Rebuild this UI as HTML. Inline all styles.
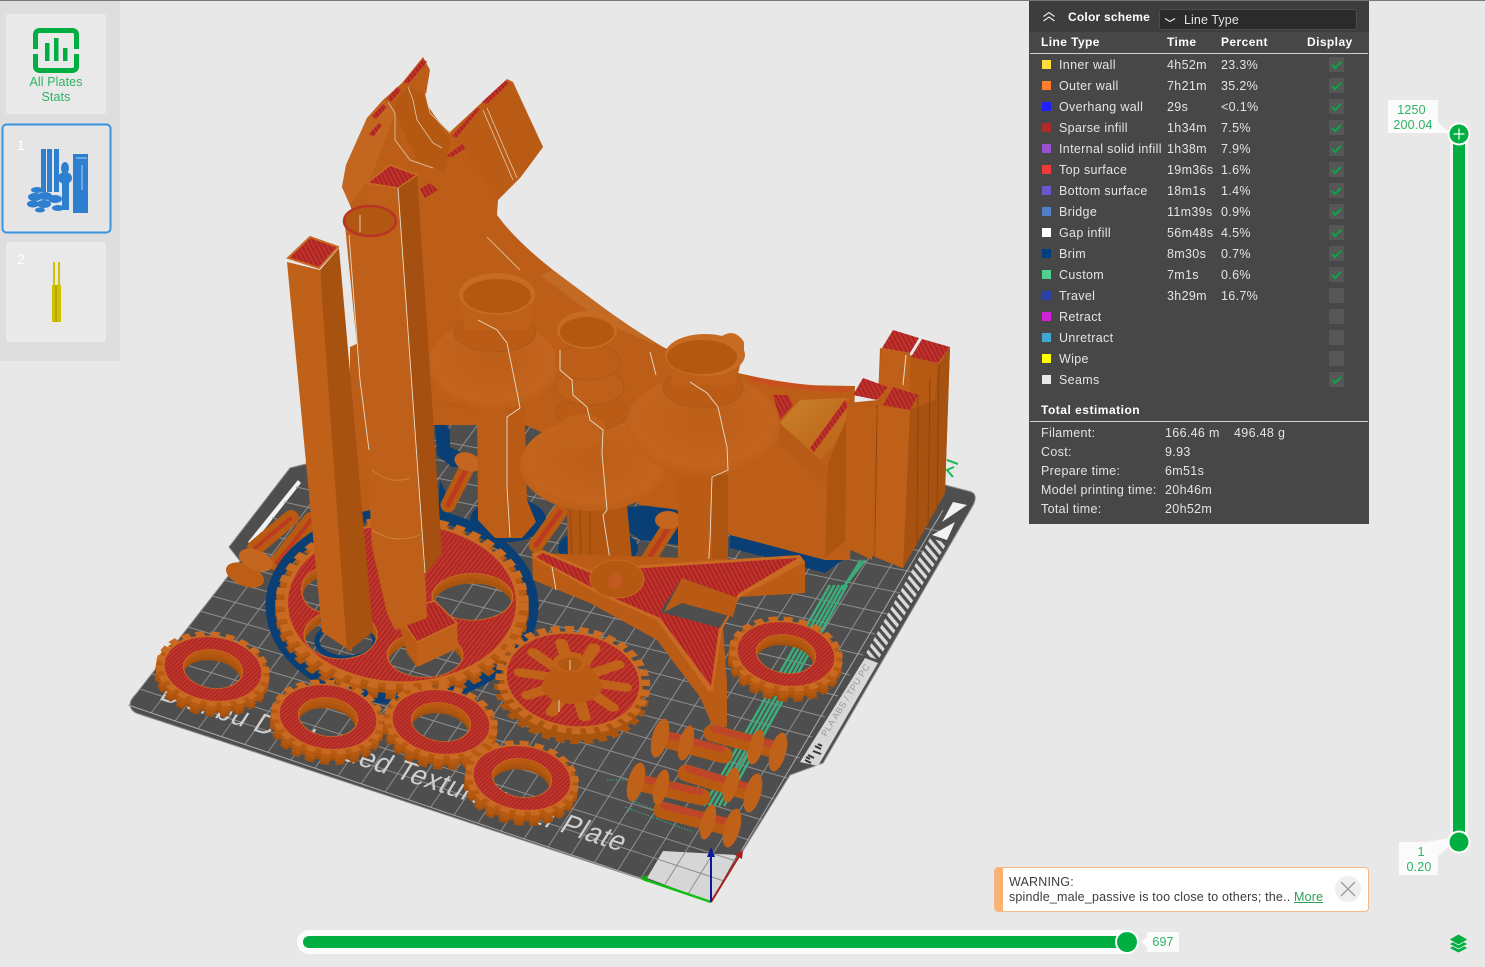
<!DOCTYPE html>
<html><head><meta charset="utf-8"><title>Preview</title>
<style>
html,body{margin:0;padding:0;width:1485px;height:967px;overflow:hidden;background:#e8e8e8;font-family:"Liberation Sans",sans-serif;}
#a{position:absolute;left:0;top:0;width:1485px;height:967px;overflow:hidden}
.t{position:absolute;white-space:nowrap;line-height:14px;font-size:12.5px;letter-spacing:.33px}
.w{color:#e4e4e4;margin-top:1px}.b{color:#fff;font-weight:bold;font-size:12px;letter-spacing:.42px;margin-top:1px}
.sw{position:absolute;left:1042px;width:9px;height:9px}
.cb{position:absolute;left:1329px;width:15px;height:15px;background:#565656}
.g{color:#2bb464;letter-spacing:.15px;margin-top:1px}
.wn{color:#3c3c3c;letter-spacing:.18px;margin-top:1px}
</style></head><body><div id="a">
<svg width="1485" height="967" style="position:absolute;left:0;top:0" xmlns="http://www.w3.org/2000/svg">
<defs>
<pattern id="rh" width="3.2" height="3.2" patternUnits="userSpaceOnUse" patternTransform="rotate(-62)"><rect width="3.2" height="3.2" fill="#c2352c"/><rect width="3.2" height="1.1" fill="#a32622"/></pattern>
<pattern id="rp" width="4" height="4" patternUnits="userSpaceOnUse" patternTransform="rotate(62)"><rect width="4" height="4" fill="#c2302c"/><rect width="4" height="1.4" fill="#9e2320"/></pattern>
<pattern id="ht" width="6.6" height="6.6" patternUnits="userSpaceOnUse" patternTransform="rotate(-40)"><rect width="6.6" height="6.6" fill="#4c4c4c"/><rect width="3.4" height="6.6" fill="#d8d8d8"/></pattern>
<radialGradient id="disc" cx=".5" cy=".45" r=".6"><stop offset="0" stop-color="#bc5e18"/><stop offset=".75" stop-color="#c2641e"/><stop offset="1" stop-color="#ba5c16"/></radialGradient>
<linearGradient id="ye" x1="0" y1="0" x2="1" y2="1"><stop offset="0" stop-color="#c8822a"/><stop offset="1" stop-color="#bd6018"/></linearGradient>
<g id="gear"><path fill="currentColor" fill-rule="evenodd" d="M-47,0a47,47 0 1,0 94,0a47,47 0 1,0 -94,0zM-27,0a27,27 0 1,0 54,0a27,27 0 1,0 -54,0z"/><circle r="49" fill="none" stroke="currentColor" stroke-width="8" stroke-dasharray="8.4 5.6"/></g>
<g id="fg">
<use href="#gear" y="15" color="#a4500f"/><use href="#gear" y="11" color="#b0560f"/><use href="#gear" y="6" color="#b85a12"/>
<use href="#gear" color="#c96a22"/>
<path fill="url(#rh)" fill-rule="evenodd" d="M-45,0a45,45 0 1,0 90,0a45,45 0 1,0 -90,0zM-28,0a28,28 0 1,0 56,0a28,28 0 1,0 -56,0z"/>
</g>
</defs>

<!-- plate -->
<path d="M136,694Q124,706 136,713L711,902L790,775L823,763L972,507Q980,493 968,491L945,485L368,393L310,463L290,468L229,547L240,561Z" fill="#4e4e4e" stroke="#8a8a8a" stroke-width="1"/>
<path d="M248,542L298,480L301,483L252,545Z" fill="#f2f2f2"/>
<path d="M647,878L663,851L737,855L711,902Z" fill="#d6d6d6"/>
<g stroke="#8e8e8e" stroke-width="1" fill="none">
<path d="M151,713L392,397M175,721L416,401M198,729L440,405M221,737L463,409M245,744L487,412M268,752L511,416M291,760L535,420M315,768L559,424M338,776L583,428M361,784L606,432M385,792L630,436M408,800L654,440M431,807L678,443M454,815L702,447M478,823L726,451M501,831L749,455M524,839L773,459M548,847L797,463M571,855L821,467M594,863L845,471M618,870L869,474M641,878L892,478M664,886L916,482M688,894L940,486"/>
<path d="M140,689L724,881M152,674L736,861M164,658L749,840M176,643L762,820M188,627L774,799M200,611L787,778M212,596L800,758M224,580L812,737M236,565L825,717M248,549L838,696M260,533L850,675M272,518L863,655M284,502L875,634M296,487L888,614M308,471L901,593M320,455L913,572M332,440L926,552M344,424L939,531"/>
<path d="M128,705L711,902L943,510" stroke="#a8a8a8"/>
</g>
<text transform="matrix(1 .33 -.6 .95 158 699)" font-family="Liberation Sans" font-size="26" fill="#cfcfcf" textLength="462" lengthAdjust="spacing">Bambu Dual-Sided Textured PEI Plate</text>
<path d="M865,655L930,538L947,543L878,660Z" fill="url(#ht)"/>
<path d="M800,762L865,658L878,663L818,766Z" fill="#d8d8d8"/>
<path d="M953,502L967,505L942,522Z" fill="#f2f2f2"/>
<path d="M955,522L947,540L932,535Z" fill="#f2f2f2"/>
<path d="M805,760l6,3M808,755l6,3M806,757l4,2M815,746l6,3M813,751l8,3M818,744l4,2" stroke="#333" stroke-width="2" fill="none"/>
<text transform="translate(826,737) rotate(-58)" font-family="Liberation Sans" font-size="9" fill="#9a9a9a" textLength="83" lengthAdjust="spacing">PLA ABS / TPU PC</text>
<path d="M947,460L958,464M954,467L947,470L953,477" stroke="#1db954" stroke-width="2" fill="none"/>

<!-- custom green -->
<g stroke="#3dab7b" fill="none">
<path stroke-width="2.6" d="M830,585L704,806M834.5,585L709,806M839,585L714,806M843,585L719,806M847,585L724,806M847,583L865,560M842,590L861,560"/>
<path d="M607,780H627M625,807L693,832M630,800L693,825M628,812L648,782" stroke-dasharray="1.5 1.5" stroke-width="1"/>
</g>
<!-- axes -->
<path d="M711,902L643,879" stroke="#10c010" stroke-width="2.5"/><path d="M640,878l8,-3 -1,7z" fill="#10b010"/>
<path d="M711,902L741,853" stroke="#a81c1c" stroke-width="2"/><path d="M743,850l-1,9 -7,-4z" fill="#a81c1c"/>
<path d="M711,902V854" stroke="#0a1a9a" stroke-width="2"/><path d="M711,847l4,10h-8z" fill="#0a1a9a"/>

<!-- navy brims -->
<g fill="#0a3f75">
<path d="M435,423Q448,421 450,432L450,447L466,455L466,467L452,467L437,455Z"/>
<path d="M627,507L660,505L680,512L680,545L640,540L627,530Z"/>
<path d="M730,533L820,558L843,538L843,560L825,573L800,566L730,548Z"/>
<path d="M440,480L452,505L448,520L438,512Z"/>
</g>
<ellipse cx="508" cy="520" rx="38" ry="22" fill="#0a3f75"/>
<ellipse cx="598" cy="548" rx="40" ry="20" fill="#0a3f75"/>

<!-- left spindles -->
<g fill="none" stroke-linecap="round">
<path d="M255,548L291,518" stroke="#b85a12" stroke-width="16"/><path d="M255,548L291,518" stroke="#bb3a20" stroke-width="4" stroke-dasharray="2 2"/>
<path d="M277,563L311,520" stroke="#b85a12" stroke-width="16"/><path d="M277,563L311,520" stroke="#bb3a20" stroke-width="4" stroke-dasharray="2 2"/>
<path d="M448,505L470,462" stroke="#b85a12" stroke-width="15"/><path d="M448,505L470,462" stroke="#bb3a20" stroke-width="5" stroke-dasharray="2 2"/>
</g>
<ellipse cx="245" cy="575" rx="20" ry="11" transform="rotate(22 245 575)" fill="#bc5e16"/>
<ellipse cx="256" cy="560" rx="18" ry="10" transform="rotate(22 256 560)" fill="#c46620"/>
<ellipse cx="468" cy="462" rx="14" ry="9" transform="rotate(20 468 462)" fill="#c46620"/>

<!-- main back body -->
<path d="M423,57L402,83L383,100L367,118L346,165L342,187L350,205L360,235L365,340L350,347L350,520L427,500L427,425L525,425L560,440L640,505L680,510L730,535L825,560L850,560L855,386L800,385Q760,382 747,375Q700,365 663,347Q620,322 553,270Q515,240 497,215L498,200L520,178L543,147L513,82L507,79L450,132Q435,120 425,100L430,70Z" fill="#bd5e18"/>
<!-- prong shading -->
<path d="M367,118L346,165L342,187L350,205L372,175L395,113L383,100Z" fill="#c36720"/>
<path d="M480,108L510,82L543,147L520,178Z" fill="#b95b15"/>
<path d="M455,138L480,108L517,178L498,200Z" fill="#ba5c16"/>
<path d="M395,113L417,160L445,172L450,140L430,113L425,93L408,87L395,100Z" fill="#b55812"/>
<path d="M553,270L620,320L660,347L600,320L540,275Z" fill="#c36b25"/>
<g fill="url(#rp)">
<path d="M404,82L423,59L427,62L408,84Z"/><path d="M387,99L397,87L401,90L391,102Z"/><path d="M372,116L383,104L387,107L376,119Z"/><path d="M369,134L379,123L382,125L373,137Z"/>
<path d="M482,102L505,81L509,83L487,104Z"/><path d="M452,136L477,108L480,109L456,138Z"/><path d="M446,156L462,144L466,148L452,157Z"/>
<path d="M420,189L430,183L438,190L425,198Z"/>
</g>
<g fill="none" stroke="#e6dcc8" stroke-width=".8" opacity=".85">
<path d="M388,102L395,113L395,140L410,160L433,168"/><path d="M408,87L413,100L417,120L433,143L442,148"/><path d="M425,93L430,113L450,133"/><path d="M487,108L517,178"/><path d="M483,110L513,180"/><path d="M487,237L520,270"/>
</g>
<!-- right block -->
<path d="M730,472L777,443L825,483L825,558L730,533Z" fill="#bd5e18"/>
<path d="M777,443L780,423L820,460L833,480L825,483Z" fill="#b85b16"/>
<path d="M780,423L800,400L847,398L847,420L833,447L820,460Z" fill="url(#ye)"/>
<path d="M773,395L788,395L793,405L780,420Z" fill="url(#rp)"/>
<path d="M810,448L845,400L849,405L814,452Z" fill="url(#rp)"/>
<path d="M828,463L846,420L846,540L825,558Z" fill="#ad5411"/>
<path d="M747,375Q800,387 853,387L850,392Q800,392 750,381Z" fill="#c8501f"/>
<!-- right towers -->
<path d="M880,348L910,355L938,363L950,347L945,493L903,568L875,557L845,547L847,403L878,400Z" fill="#bb5c16"/>
<path d="M910,410L950,347L945,493L903,568Z" fill="#a75210"/>
<path d="M882,348L910,353L909,405L878,390Z" fill="#bf601a"/>
<path d="M911,357L938,363L935,400L910,410Z" fill="#b65913"/>
<path d="M918,395L917,550M930,378L928,530M939,364L937,515M877,405L875,557" stroke="#8e440c" stroke-width="1" fill="none"/>
<path d="M847,403L877,408L872,560L845,547Z" fill="#bd5e17"/>
<path d="M878,406L910,410L903,568L875,557Z" fill="#bf6019"/>
<g fill="url(#rp)"><path d="M853,395L863,378L888,387L877,400Z"/><path d="M883,405L893,387L918,395L910,410Z"/><path d="M882,348L893,330L919,338L910,353Z"/><path d="M911,357L922,339L950,347L938,363Z"/></g>
<path d="M906,355L903,385" stroke="#e6dcc8" stroke-width="1"/>

<!-- big gear -->
<ellipse cx="402" cy="606" rx="131" ry="93" fill="none" stroke="#0a3f75" stroke-width="11"/>
<ellipse cx="346" cy="641" rx="29" ry="17" fill="none" stroke="#0a3f75" stroke-width="5"/>
<g transform="translate(402,603) scale(1.28,.88)">
<path fill="#a9540f" fill-rule="evenodd" transform="translate(0,11)" d="M-92,0a92,92 0 1,0 184,0a92,92 0 1,0 -184,0zM-76,36a28,27 0 1,0 56,0a28,27 0 1,0 -56,0zM-11,59a29,25 0 1,0 58,0a29,25 0 1,0 -58,0zM24,-7a31,26 0 1,0 62,0a31,26 0 1,0 -62,0zM-78,-15a18,25 0 1,0 36,0a18,25 0 1,0 -36,0z"/>
<circle cy="11" r="95" fill="none" stroke="#a9540f" stroke-width="8" stroke-dasharray="8 6"/>
<circle cy="5" r="95" fill="none" stroke="#b85a12" stroke-width="8" stroke-dasharray="8 6"/>
<path fill="#b65912" fill-rule="evenodd" transform="translate(0,5)" d="M-92,0a92,92 0 1,0 184,0a92,92 0 1,0 -184,0zM-76,36a28,27 0 1,0 56,0a28,27 0 1,0 -56,0zM-11,59a29,25 0 1,0 58,0a29,25 0 1,0 -58,0zM24,-7a31,26 0 1,0 62,0a31,26 0 1,0 -62,0zM-78,-15a18,25 0 1,0 36,0a18,25 0 1,0 -36,0z"/>
<circle r="95" fill="none" stroke="#c96a22" stroke-width="8" stroke-dasharray="8 6"/>
<path fill="#c96a22" fill-rule="evenodd" d="M-92,0a92,92 0 1,0 184,0a92,92 0 1,0 -184,0zM-76,36a28,27 0 1,0 56,0a28,27 0 1,0 -56,0zM-11,59a29,25 0 1,0 58,0a29,25 0 1,0 -58,0zM24,-7a31,26 0 1,0 62,0a31,26 0 1,0 -62,0zM-78,-15a18,25 0 1,0 36,0a18,25 0 1,0 -36,0z"/>
<path fill="url(#rh)" fill-rule="evenodd" d="M-89,0a89,89 0 1,0 178,0a89,89 0 1,0 -178,0zM-77,36a29,28 0 1,0 58,0a29,28 0 1,0 -58,0zM-12,59a30,26 0 1,0 60,0a30,26 0 1,0 -60,0zM23,-7a32,27 0 1,0 64,0a32,27 0 1,0 -64,0zM-79,-15a19,26 0 1,0 38,0a19,26 0 1,0 -38,0z"/>
</g>
<!-- cube block -->
<path d="M395,610L407,653L417,667L458,648L457,623L417,642Z" fill="#b95b14"/>
<path d="M417,642L457,623L458,648L417,667Z" fill="#c0611a"/>
<path d="M395,610L435,601L457,623L417,642Z" fill="url(#rp)" stroke="#c96a22" stroke-width="1.5"/>

<!-- V1 -->
<path d="M440,405L477,400H525V425L527,500L536,522L522,538L495,538L480,522L477,410Z" fill="#b95b15"/>
<path d="M477,405L478,520L495,538L507,538L508,405Z" fill="#bd5e18"/>
<ellipse cx="493" cy="365" rx="65" ry="45" fill="url(#disc)"/>
<ellipse cx="495" cy="332" rx="41" ry="20" fill="#bb5c16" stroke="#a9530f" stroke-width=".6"/>
<path d="M460,296H535L530,330H465Z" fill="#bf6019"/>
<ellipse cx="497" cy="294" rx="38" ry="21" fill="#c86b22"/>
<ellipse cx="497" cy="296" rx="34" ry="17" fill="#b35810"/>
<path d="M478,320L497,330L507,343L518,397L520,408L507,417L507,487L510,537" fill="none" stroke="#e6dcc8" stroke-width=".9"/>

<!-- S9 S10 spindles -->
<g fill="none" stroke-linecap="round">
<path d="M536,545L560,512" stroke="#b85a12" stroke-width="15"/><path d="M536,545L560,512" stroke="#bb3a20" stroke-width="5" stroke-dasharray="2 2"/>
<path d="M648,560L672,522" stroke="#b85a12" stroke-width="15"/><path d="M648,560L672,522" stroke="#bb3a20" stroke-width="5" stroke-dasharray="2 2"/>
</g>
<ellipse cx="668" cy="520" rx="13" ry="9" fill="#c46620"/>

<!-- V2 -->
<path d="M567,505H627L632,560L600,568L568,560Z" fill="#b25712"/>
<path d="M570,510l2,50M580,510l1,55M590,510v58" stroke="#a04d0e" stroke-width="2" fill="none"/>
<ellipse cx="593" cy="465" rx="73" ry="46" fill="url(#disc)"/>
<ellipse cx="592" cy="412" rx="36" ry="18" fill="#ba5c15" stroke="#a9530f" stroke-width=".6"/>
<ellipse cx="582" cy="431" rx="24" ry="17" fill="#c0621a"/>
<ellipse cx="590" cy="387" rx="34" ry="18" fill="#bf601a" stroke="#a9530f" stroke-width=".6"/>
<ellipse cx="588" cy="362" rx="32" ry="18" fill="#bd5e18" stroke="#a9530f" stroke-width=".6"/>
<ellipse cx="587" cy="330" rx="30" ry="19" fill="#c86b22"/>
<ellipse cx="587" cy="332" rx="27" ry="15" fill="#b35810"/>
<path d="M560,350L560,370L572,380L573,395L587,407L590,420L603,430L602,453L607,510L603,515L610,560" fill="none" stroke="#e6dcc8" stroke-width=".9"/>

<!-- V3 -->
<path d="M678,470H728V560L730,570H678Z" fill="#bb5c16"/><path d="M712,475H728V565H712Z" fill="#ad5411"/>
<ellipse cx="703" cy="425" rx="77" ry="50" fill="url(#disc)"/>
<ellipse cx="703" cy="388" rx="40" ry="20" fill="#bb5c16" stroke="#a9530f" stroke-width=".6"/>
<path d="M668,358H742L735,385H672Z" fill="#bf6019"/>
<ellipse cx="705" cy="355" rx="40" ry="21" fill="#c86b22"/>
<path d="M722,336Q735,328 744,342L744,356L725,345Z" fill="#c86b22"/>
<ellipse cx="702" cy="357" rx="35" ry="17" fill="#b35810"/>
<path d="M690,382L707,393L718,407L727,447L728,470L712,477L710,540L708,570" fill="none" stroke="#e6dcc8" stroke-width=".9"/>
<path d="M650,352L656,375" stroke="#e6dcc8" stroke-width=".9" fill="none"/>

<!-- tower 3 -->
<path d="M367,183L398,188L425,573L395,560Z" fill="#bf601a"/>
<path d="M398,188L417,175L442,553L425,575Z" fill="#a55010"/>
<path d="M367,183L390,165L417,175L398,188Z" fill="url(#rp)" stroke="#c96a22" stroke-width="1.5"/>
<path d="M398,188L425,573" stroke="#e6dcc8" stroke-width=".9"/>
<!-- tube -->
<path d="M345,225C345,240 396,240 397,225L426,590L427,618L395,630L387,613L372,547L367,447Z" fill="#bf601a"/>
<path d="M372,470Q390,485 410,478M372,530Q395,545 420,535" fill="none" stroke="#d08a3a" stroke-width=".8"/>
<ellipse cx="370" cy="221" rx="26" ry="15" fill="#b25712" stroke="#b83525" stroke-width="2.5"/>
<path d="M360,215V232M349,235L360,380L369,450" fill="none" stroke="#e6dcc8" stroke-width=".9"/>
<!-- tower 1 -->
<path d="M287,262L320,270L352,652L322,632Z" fill="#c0611a"/>
<path d="M320,270L339,248L373,632L347,652Z" fill="#a85210"/>
<path d="M288,258L310,237L338,247L319,268Z" fill="url(#rp)" stroke="#c96a22" stroke-width="2"/>

<!-- small gears -->
<use href="#fg" transform="translate(213,669) rotate(8) scale(1.08,.7)"/>
<use href="#fg" transform="translate(328,717) rotate(8) scale(1.08,.7)"/>
<use href="#fg" transform="translate(441,722) rotate(8) scale(1.08,.7)"/>
<use href="#fg" transform="translate(522,778) rotate(8) scale(1.08,.7)"/>
<use href="#fg" transform="translate(786,654) rotate(8) scale(1.08,.7)"/>
<!-- spoked gear -->
<g transform="translate(573,680) rotate(8) scale(1.48,1.02)">
<circle cy="10" r="49" fill="#a9540f"/><circle cy="10" r="49" fill="none" stroke="#a9540f" stroke-width="7" stroke-dasharray="6 3.6"/>
<circle r="49" fill="none" stroke="#c96a22" stroke-width="7" stroke-dasharray="6 3.6"/>
<circle r="47" fill="#c96a22"/><circle r="45" fill="url(#rh)"/>
<path d="M18,0H36M14.5,10.6L29,21.2M5.6,17.1L11.1,34.2M-5.6,17.1L-11.1,34.2M-14.5,10.6L-29,21.2M-18,0H-36M-14.5,-10.6L-29,-21.2M-5.6,-17.1L-11.1,-34.2M5.6,-17.1L11.1,-34.2M14.5,-10.6L29,-21.2" stroke="#c0621a" stroke-width="8.5" stroke-linecap="round"/>
</g>
<ellipse cx="572" cy="686" rx="30" ry="18" fill="#b95b14"/>
<path d="M544,682L556,662H586L602,682Z" fill="#bb5c16"/>
<ellipse cx="570" cy="662" rx="17" ry="10" fill="#c0621a"/>
<ellipse cx="570" cy="664" rx="12" ry="6.5" fill="#b35810"/>
<path d="M570,660V670M559,700V712" stroke="#e6dcc8" stroke-width=".9"/>

<!-- arm -->
<path d="M532,553L533,580L590,603L657,640L700,697L713,727L727,727L727,683L723,627L740,597L805,593L805,562Z" fill="#bb5c16"/>
<path d="M532,553L543,550L590,570L643,565L800,555L805,562L740,597L722,630L713,690L709,692L657,620L600,595L533,558Z" fill="#c96a22"/>
<path d="M543,553L590,573L645,568L798,558L738,594L719,628L711,686L660,618L600,592L536,557Z" fill="url(#rp)"/>
<ellipse cx="617" cy="579" rx="27" ry="19" fill="#b45812" stroke="#c96a22"/>
<path d="M608,578l8,-6 7,8 -4,9 -10,-2z" fill="#c15a20"/>
<path d="M660,612L682,578L738,598L720,628Z" fill="#4e4e4e"/>
<path d="M682,578L738,598L733,617L682,603L664,612Z" fill="#b85a14"/>
<path d="M552,567L556,590" stroke="#e6dcc8" stroke-width=".9" fill="none"/>

<!-- front spindles -->
<g fill="none" stroke-linecap="round">
<path d="M664,739L724,755" stroke="#b85a12" stroke-width="17"/><path d="M668,735L722,749" stroke="#bf4528" stroke-width="7" stroke-dasharray="1.6 1.6"/>
<path d="M712,733L776,750" stroke="#b85a12" stroke-width="17"/><path d="M714,729L772,744" stroke="#bf4528" stroke-width="7" stroke-dasharray="1.6 1.6"/>
<path d="M636,782L702,797" stroke="#b85a12" stroke-width="17"/><path d="M640,778L700,792" stroke="#bf4528" stroke-width="7" stroke-dasharray="1.6 1.6"/>
<path d="M686,773L752,793" stroke="#b85a12" stroke-width="17"/><path d="M688,769L750,787" stroke="#bf4528" stroke-width="7" stroke-dasharray="1.6 1.6"/>
<path d="M662,810L728,827" stroke="#b85a12" stroke-width="17"/><path d="M664,806L726,821" stroke="#bf4528" stroke-width="7" stroke-dasharray="1.6 1.6"/>
</g>
<g fill="#c0611a">
<ellipse cx="660" cy="738" rx="8" ry="20" transform="rotate(15 660 738)"/><ellipse cx="686" cy="743" rx="7" ry="18" transform="rotate(15 686 743)"/>
<ellipse cx="756" cy="747" rx="7" ry="18" transform="rotate(15 756 747)"/><ellipse cx="778" cy="752" rx="8" ry="20" transform="rotate(15 778 752)"/>
<ellipse cx="636" cy="782" rx="8" ry="20" transform="rotate(15 636 782)"/><ellipse cx="661" cy="787" rx="7" ry="18" transform="rotate(15 661 787)"/>
<ellipse cx="731" cy="785" rx="7" ry="18" transform="rotate(15 731 785)"/><ellipse cx="753" cy="793" rx="8" ry="20" transform="rotate(15 753 793)"/>
<ellipse cx="708" cy="822" rx="7" ry="18" transform="rotate(15 708 822)"/><ellipse cx="732" cy="828" rx="8" ry="20" transform="rotate(15 732 828)"/>
</g>

<!-- left panel -->
<rect x="0" y="0" width="120" height="361" fill="#dedede"/>
<rect x="6" y="14" width="100" height="100" rx="2" fill="#e9e9e9"/>
<rect x="2.5" y="124.5" width="108" height="108" rx="4" fill="#e5e5e5" stroke="#3a93e0" stroke-width="2"/>
<rect x="6" y="242" width="100" height="100" rx="2" fill="#e9e9e9"/>
<path d="M35.5,49V35Q35.5,30.5 40,30.5H72Q76.5,30.5 76.5,35V49M35.5,54V66Q35.5,70.5 40,70.5H72Q76.5,70.5 76.5,66V54" fill="none" stroke="#00ae42" stroke-width="5"/>
<path d="M45,43h4.5v18h-4.5zM54,38h4.5v23h-4.5zM63,48h4.5v13h-4.5z" fill="#00ae42"/>
<g fill="#2f7fd0">
<rect x="41" y="149" width="5" height="43"/><rect x="47" y="149" width="5" height="43"/><rect x="54" y="149" width="5" height="43"/>
<rect x="73" y="154" width="15" height="59"/>
<ellipse cx="65" cy="168" rx="4" ry="6"/><ellipse cx="65" cy="178" rx="7" ry="6"/><rect x="62" y="182" width="7" height="28"/>
<ellipse cx="37" cy="190" rx="6" ry="3"/><ellipse cx="35" cy="197" rx="7" ry="4"/><ellipse cx="45" cy="196" rx="7" ry="4"/><ellipse cx="33" cy="204" rx="6" ry="3.5"/><ellipse cx="44" cy="204" rx="7" ry="4"/><ellipse cx="55" cy="199" rx="7" ry="4"/><ellipse cx="58" cy="208" rx="6" ry="3"/><ellipse cx="40" cy="210" rx="5" ry="2.5"/>
</g>
<path d="M76,158h11M82,165v25" stroke="#a8d0f0" stroke-width="1"/>
<g fill="#cfc000"><rect x="52" y="285" width="9" height="37"/><rect x="53" y="262" width="2" height="23"/><rect x="58" y="262" width="2" height="23"/></g>
<path d="M56,285v37" stroke="#8f8600" stroke-width=".8"/>

<!-- top line -->
<rect x="0" y="0" width="1485" height="1" fill="#777"/>

<!-- right slider -->
<rect x="1450" y="128" width="18" height="720" rx="9" fill="#f4f4f4"/>
<rect x="1453" y="134" width="12" height="708" fill="#00ae42"/>
<path d="M1388,100H1438V122L1450,133H1388Z" fill="#fbfbfb"/>
<path d="M1399,842H1420L1438,842V875H1399Z" fill="#fbfbfb"/><path d="M1420,843L1450,838V846L1438,856Z" fill="#fbfbfb"/>
<circle cx="1459" cy="134" r="11.5" fill="#fff"/><circle cx="1459" cy="134" r="9.5" fill="#00ae42"/>
<path d="M1459,128.5V139.5M1453.5,134H1464.5" stroke="#fff" stroke-width="1.2"/>
<circle cx="1459" cy="842" r="11.5" fill="#fff"/><circle cx="1459" cy="842" r="9.5" fill="#00ae42"/>

<!-- bottom slider -->
<rect x="297" y="930" width="840" height="24" rx="12" fill="#fbfbfb"/>
<rect x="303" y="936" width="824" height="12" rx="6" fill="#00ae42"/>
<circle cx="1127" cy="942" r="12" fill="#fff"/><circle cx="1127" cy="942" r="10" fill="#00ae42"/>
<rect x="1147" y="932" width="32" height="20" rx="1" fill="#fbfbfb"/><path d="M1147,937L1141,942L1147,947Z" fill="#fbfbfb"/>
<!-- layers icon -->
<g fill="#00ae42" stroke="#e8e8e8" stroke-width=".8"><path d="M1449,948L1458.5,943L1468,948L1458.5,953Z"/><path d="M1449,944L1458.5,939L1468,944L1458.5,949Z"/><path d="M1449,939.5L1458.5,934L1468,939.5L1458.5,945Z"/></g>
</svg>

<div class="t" style="left:6px;top:75px;width:100px;text-align:center;color:#2bb464;font-size:12.5px;line-height:15px;letter-spacing:.1px">All Plates<br>Stats</div>
<div class="t" style="left:17px;top:138px;color:#fff;font-size:14px">1</div>
<div class="t" style="left:17px;top:252px;color:#fff;font-size:14px">2</div>

<!-- table -->
<div style="position:absolute;left:1029px;top:1px;width:340px;height:523px;background:#474747"></div>
<div style="position:absolute;left:1029px;top:1px;width:340px;height:31px;background:#3d3d3d"></div>
<div style="position:absolute;left:1159px;top:9px;width:196px;height:19px;background:#2b2b2b;border:1px solid #4d4d4d;border-radius:3px"></div>
<svg width="340" height="40" style="position:absolute;left:1029px;top:0">
<path d="M14.5,16.5L20,12.5L25.5,16.5M14.5,21L20,17L25.5,21" fill="none" stroke="#eee" stroke-width="1.1"/>
<path d="M136,18.5L141,21.5L146,18.5" fill="none" stroke="#eee" stroke-width="1.1"/>
</svg>
<div class="t b" style="left:1068px;top:9px;letter-spacing:.22px">Color scheme</div>
<div class="t" style="left:1184px;top:13px;color:#e4e4e4;letter-spacing:.1px">Line Type</div>
<div class="t b" style="left:1041px;top:34px">Line Type</div>
<div class="t b" style="left:1167px;top:34px">Time</div>
<div class="t b" style="left:1221px;top:34px">Percent</div>
<div class="t b" style="left:1307px;top:34px">Display</div>
<div style="position:absolute;left:1030px;top:53px;width:338px;height:1px;background:#cfcfcf"></div>

<div class="sw" style="top:60px;background:#ffdf3a"></div><div class="t w" style="left:1059px;top:57px">Inner wall</div><div class="t w" style="left:1167px;top:57px">4h52m</div><div class="t w" style="left:1221px;top:57px">23.3%</div>
<div class="sw" style="top:81px;background:#ff7f2f"></div><div class="t w" style="left:1059px;top:78px">Outer wall</div><div class="t w" style="left:1167px;top:78px">7h21m</div><div class="t w" style="left:1221px;top:78px">35.2%</div>
<div class="sw" style="top:102px;background:#1f1fff"></div><div class="t w" style="left:1059px;top:99px">Overhang wall</div><div class="t w" style="left:1167px;top:99px">29s</div><div class="t w" style="left:1221px;top:99px">&lt;0.1%</div>
<div class="sw" style="top:123px;background:#b02a2a"></div><div class="t w" style="left:1059px;top:120px">Sparse infill</div><div class="t w" style="left:1167px;top:120px">1h34m</div><div class="t w" style="left:1221px;top:120px">7.5%</div>
<div class="sw" style="top:144px;background:#9650d0"></div><div class="t w" style="left:1059px;top:141px">Internal solid infill</div><div class="t w" style="left:1167px;top:141px">1h38m</div><div class="t w" style="left:1221px;top:141px">7.9%</div>
<div class="sw" style="top:165px;background:#f03a3a"></div><div class="t w" style="left:1059px;top:162px">Top surface</div><div class="t w" style="left:1167px;top:162px">19m36s</div><div class="t w" style="left:1221px;top:162px">1.6%</div>
<div class="sw" style="top:186px;background:#6a55cc"></div><div class="t w" style="left:1059px;top:183px">Bottom surface</div><div class="t w" style="left:1167px;top:183px">18m1s</div><div class="t w" style="left:1221px;top:183px">1.4%</div>
<div class="sw" style="top:207px;background:#5080c8"></div><div class="t w" style="left:1059px;top:204px">Bridge</div><div class="t w" style="left:1167px;top:204px">11m39s</div><div class="t w" style="left:1221px;top:204px">0.9%</div>
<div class="sw" style="top:228px;background:#fff"></div><div class="t w" style="left:1059px;top:225px">Gap infill</div><div class="t w" style="left:1167px;top:225px">56m48s</div><div class="t w" style="left:1221px;top:225px">4.5%</div>
<div class="sw" style="top:249px;background:#003f7f"></div><div class="t w" style="left:1059px;top:246px">Brim</div><div class="t w" style="left:1167px;top:246px">8m30s</div><div class="t w" style="left:1221px;top:246px">0.7%</div>
<div class="sw" style="top:270px;background:#50d090"></div><div class="t w" style="left:1059px;top:267px">Custom</div><div class="t w" style="left:1167px;top:267px">7m1s</div><div class="t w" style="left:1221px;top:267px">0.6%</div>
<div class="sw" style="top:291px;background:#2a3fa8"></div><div class="t w" style="left:1059px;top:288px">Travel</div><div class="t w" style="left:1167px;top:288px">3h29m</div><div class="t w" style="left:1221px;top:288px">16.7%</div>
<div class="sw" style="top:312px;background:#d020d8"></div><div class="t w" style="left:1059px;top:309px">Retract</div>
<div class="sw" style="top:333px;background:#40a8d0"></div><div class="t w" style="left:1059px;top:330px">Unretract</div>
<div class="sw" style="top:354px;background:#ffff00"></div><div class="t w" style="left:1059px;top:351px">Wipe</div>
<div class="sw" style="top:375px;background:#e8e8e8"></div><div class="t w" style="left:1059px;top:372px">Seams</div>

<div class="cb" style="top:57px"></div><div class="cb" style="top:78px"></div><div class="cb" style="top:99px"></div><div class="cb" style="top:120px"></div><div class="cb" style="top:141px"></div><div class="cb" style="top:162px"></div><div class="cb" style="top:183px"></div><div class="cb" style="top:204px"></div><div class="cb" style="top:225px"></div><div class="cb" style="top:246px"></div><div class="cb" style="top:267px"></div><div class="cb" style="top:288px"></div><div class="cb" style="top:309px"></div><div class="cb" style="top:330px"></div><div class="cb" style="top:351px"></div><div class="cb" style="top:372px"></div>
<svg width="15" height="335" style="position:absolute;left:1329px;top:57px" fill="none" stroke="#0aa548" stroke-width="2">
<path d="M3,8L6,11L12,5"/><path d="M3,29L6,32L12,26"/><path d="M3,50L6,53L12,47"/><path d="M3,71L6,74L12,68"/><path d="M3,92L6,95L12,89"/><path d="M3,113L6,116L12,110"/><path d="M3,134L6,137L12,131"/><path d="M3,155L6,158L12,152"/><path d="M3,176L6,179L12,173"/><path d="M3,197L6,200L12,194"/><path d="M3,218L6,221L12,215"/><path d="M3,323L6,326L12,320"/>
</svg>

<div class="t b" style="left:1041px;top:402px;letter-spacing:.5px">Total estimation</div>
<div style="position:absolute;left:1030px;top:421px;width:338px;height:1px;background:#cfcfcf"></div>
<div class="t w" style="left:1041px;top:425px">Filament:</div><div class="t w" style="left:1165px;top:425px">166.46 m</div><div class="t w" style="left:1234px;top:425px">496.48 g</div>
<div class="t w" style="left:1041px;top:444px">Cost:</div><div class="t w" style="left:1165px;top:444px">9.93</div>
<div class="t w" style="left:1041px;top:463px">Prepare time:</div><div class="t w" style="left:1165px;top:463px">6m51s</div>
<div class="t w" style="left:1041px;top:482px">Model printing time:</div><div class="t w" style="left:1165px;top:482px">20h46m</div>
<div class="t w" style="left:1041px;top:501px">Total time:</div><div class="t w" style="left:1165px;top:501px">20h52m</div>

<!-- warning -->
<div style="position:absolute;left:994px;top:867px;width:373px;height:43px;background:#fff;border:1px solid #f5b888;border-radius:4px;overflow:hidden"><div style="position:absolute;left:-1px;top:-1px;width:9px;height:45px;background:#fdb274"></div></div>
<div class="t wn" style="left:1009px;top:874px">WARNING:</div>
<div class="t wn" style="left:1009px;top:889px">spindle_male_passive is too close to others; the..</div>
<div class="t" style="left:1294px;top:890px;color:#2c9e55;letter-spacing:.18px;text-decoration:underline">More</div>
<svg width="28" height="28" style="position:absolute;left:1334px;top:875px"><circle cx="14" cy="14" r="13" fill="#efefef"/><path d="M7,7L21,21M21,7L7,21" stroke="#9a9a9a" stroke-width="1.3"/></svg>

<!-- slider labels -->
<div class="t g" style="left:1388px;top:102px;width:47px;text-align:center">1250</div>
<div class="t g" style="left:1388px;top:117px;width:50px;text-align:center">200.04</div>
<div class="t g" style="left:1401px;top:844px;width:40px;text-align:center">1</div>
<div class="t g" style="left:1399px;top:859px;width:40px;text-align:center">0.20</div>
<div class="t g" style="left:1147px;top:934px;width:32px;text-align:center">697</div>
</div></body></html>
